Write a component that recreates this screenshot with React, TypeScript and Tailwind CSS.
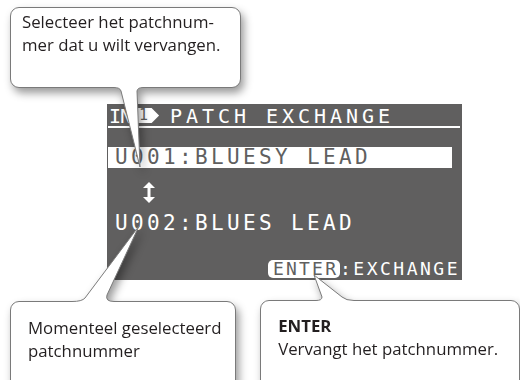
const lcd = "font-['DejaVu_Sans_Mono',monospace] leading-none"

function Callout({
  className,
  tail,
  children,
}: {
  className: string
  tail: { d: string; cover: [number, number, number, number] }
  children: React.ReactNode
}) {
  return (
    <div className={`relative z-10 drop-shadow-[3px_5px_4px_rgba(0,0,0,0.4)] ${className}`}>
      <div className="h-full w-full rounded-[9px] border border-[#7a7a7a] bg-white text-[#231f20]">
        {children}
      </div>
      <svg className="absolute left-0 top-0 overflow-visible" width="1" height="1">
        <rect x={tail.cover[0]} y={tail.cover[1]} width={tail.cover[2]} height={tail.cover[3]} fill="#fff" />
        <path d={tail.d} fill="#fff" stroke="#7a7a7a" strokeWidth="1" strokeLinejoin="round" />
      </svg>
    </div>
  )
}

function UpDownArrow() {
  return (
    <svg width="12" height="21" viewBox="0 0 12 21" className="ml-[36px] mt-[14px]">
      <polygon points="6,0 12,6 0,6" fill="#fff" />
      <rect x="4.5" y="5" width="3" height="11" fill="#fff" />
      <polygon points="0,15 12,15 6,21" fill="#fff" />
    </svg>
  )
}

function PatchScreen() {
  return (
    <div className={`ml-[107px] mt-[16px] h-[176px] w-[355px] bg-[#605f5f] pt-[2px] text-white ${lcd}`}>
      <div className="flex items-start">
        <span className="ml-[2px] text-[20px] tracking-[-1px]">IN</span>
        <div className="ml-[3px] mt-[2px] flex h-[15px] w-[25px] items-center bg-white pl-[5px] text-[15px] text-[#605f5f] [clip-path:polygon(0_0,70%_0,100%_50%,70%_100%,0_100%)]">
          1
        </div>
        <span className="ml-[11px] text-[20px] tracking-[3.96px]">PATCH EXCHANGE</span>
      </div>
      <div className="ml-[1px] h-[2px] w-[352px] bg-white" />
      <div className="ml-[1px] mt-[19px] h-[21px] w-[344px] bg-white pl-[7px] text-[21px] tracking-[3.35px] text-[#605f5f]">
        U001:BLUESY LEAD
      </div>
      <UpDownArrow />
      <div className="ml-[8px] mt-[10px] h-[21px] text-[21px] tracking-[3.35px]">U002:BLUES LEAD</div>
      <div className="mt-[26px] flex items-center pl-[161px]">
        <div className="flex h-[18px] w-[72px] items-center rounded-[5px] bg-white pl-[5px] text-[18px] tracking-[2.2px] text-[#605f5f]">
          ENTER
        </div>
        <span className="text-[18px] tracking-[2.5px]">:EXCHANGE</span>
      </div>
    </div>
  )
}

export default function App() {
  return (
    <div className="relative h-[380px] w-[520px] overflow-hidden bg-white font-['Open_Sans',sans-serif]">
      <Callout
        className="ml-[10px] mt-[7px] h-[81px] w-[231px]"
        tail={{
          d: 'M104,80.5 Q110,80.5 111,84 L130,160 L127,84 Q127.5,80.5 133,80.5',
          cover: [104, 78, 29, 3],
        }}
      >
        <p className="pl-[11px] pt-[3px] text-[16.8px] leading-[22.5px]">
          Selecteer het patchnum-
          <br />
          mer dat u wilt vervangen.
        </p>
      </Callout>

      <PatchScreen />

      <div className="mt-[20px] flex items-start">
        <Callout
          className="ml-[10px] mt-[1px] h-[100px] w-[235px]"
          tail={{
            d: 'M62,0.5 Q72,0.5 75,-3 L129,-75 L97,-6 Q95,0.5 104,0.5',
            cover: [62, 0, 42, 3],
          }}
        >
          <p className="whitespace-nowrap pl-[17px] pt-[15px] text-[16.8px] leading-[22.5px]">
            Momenteel geselecteerd
            <br />
            patchnummer
          </p>
        </Callout>
        <Callout
          className="ml-[24px] h-[100px] w-[270px]"
          tail={{
            d: 'M56,0.5 Q62,0.5 62,-3 L54,-25 L82,-3 Q86,0.5 94,0.5',
            cover: [56, 0, 38, 3],
          }}
        >
          <div className="whitespace-nowrap pl-[17px] pt-[13px] text-[16.8px] leading-[23px]">
            <p className="font-bold">ENTER</p>
            <p>Vervangt het patchnummer.</p>
          </div>
        </Callout>
      </div>
    </div>
  )
}
